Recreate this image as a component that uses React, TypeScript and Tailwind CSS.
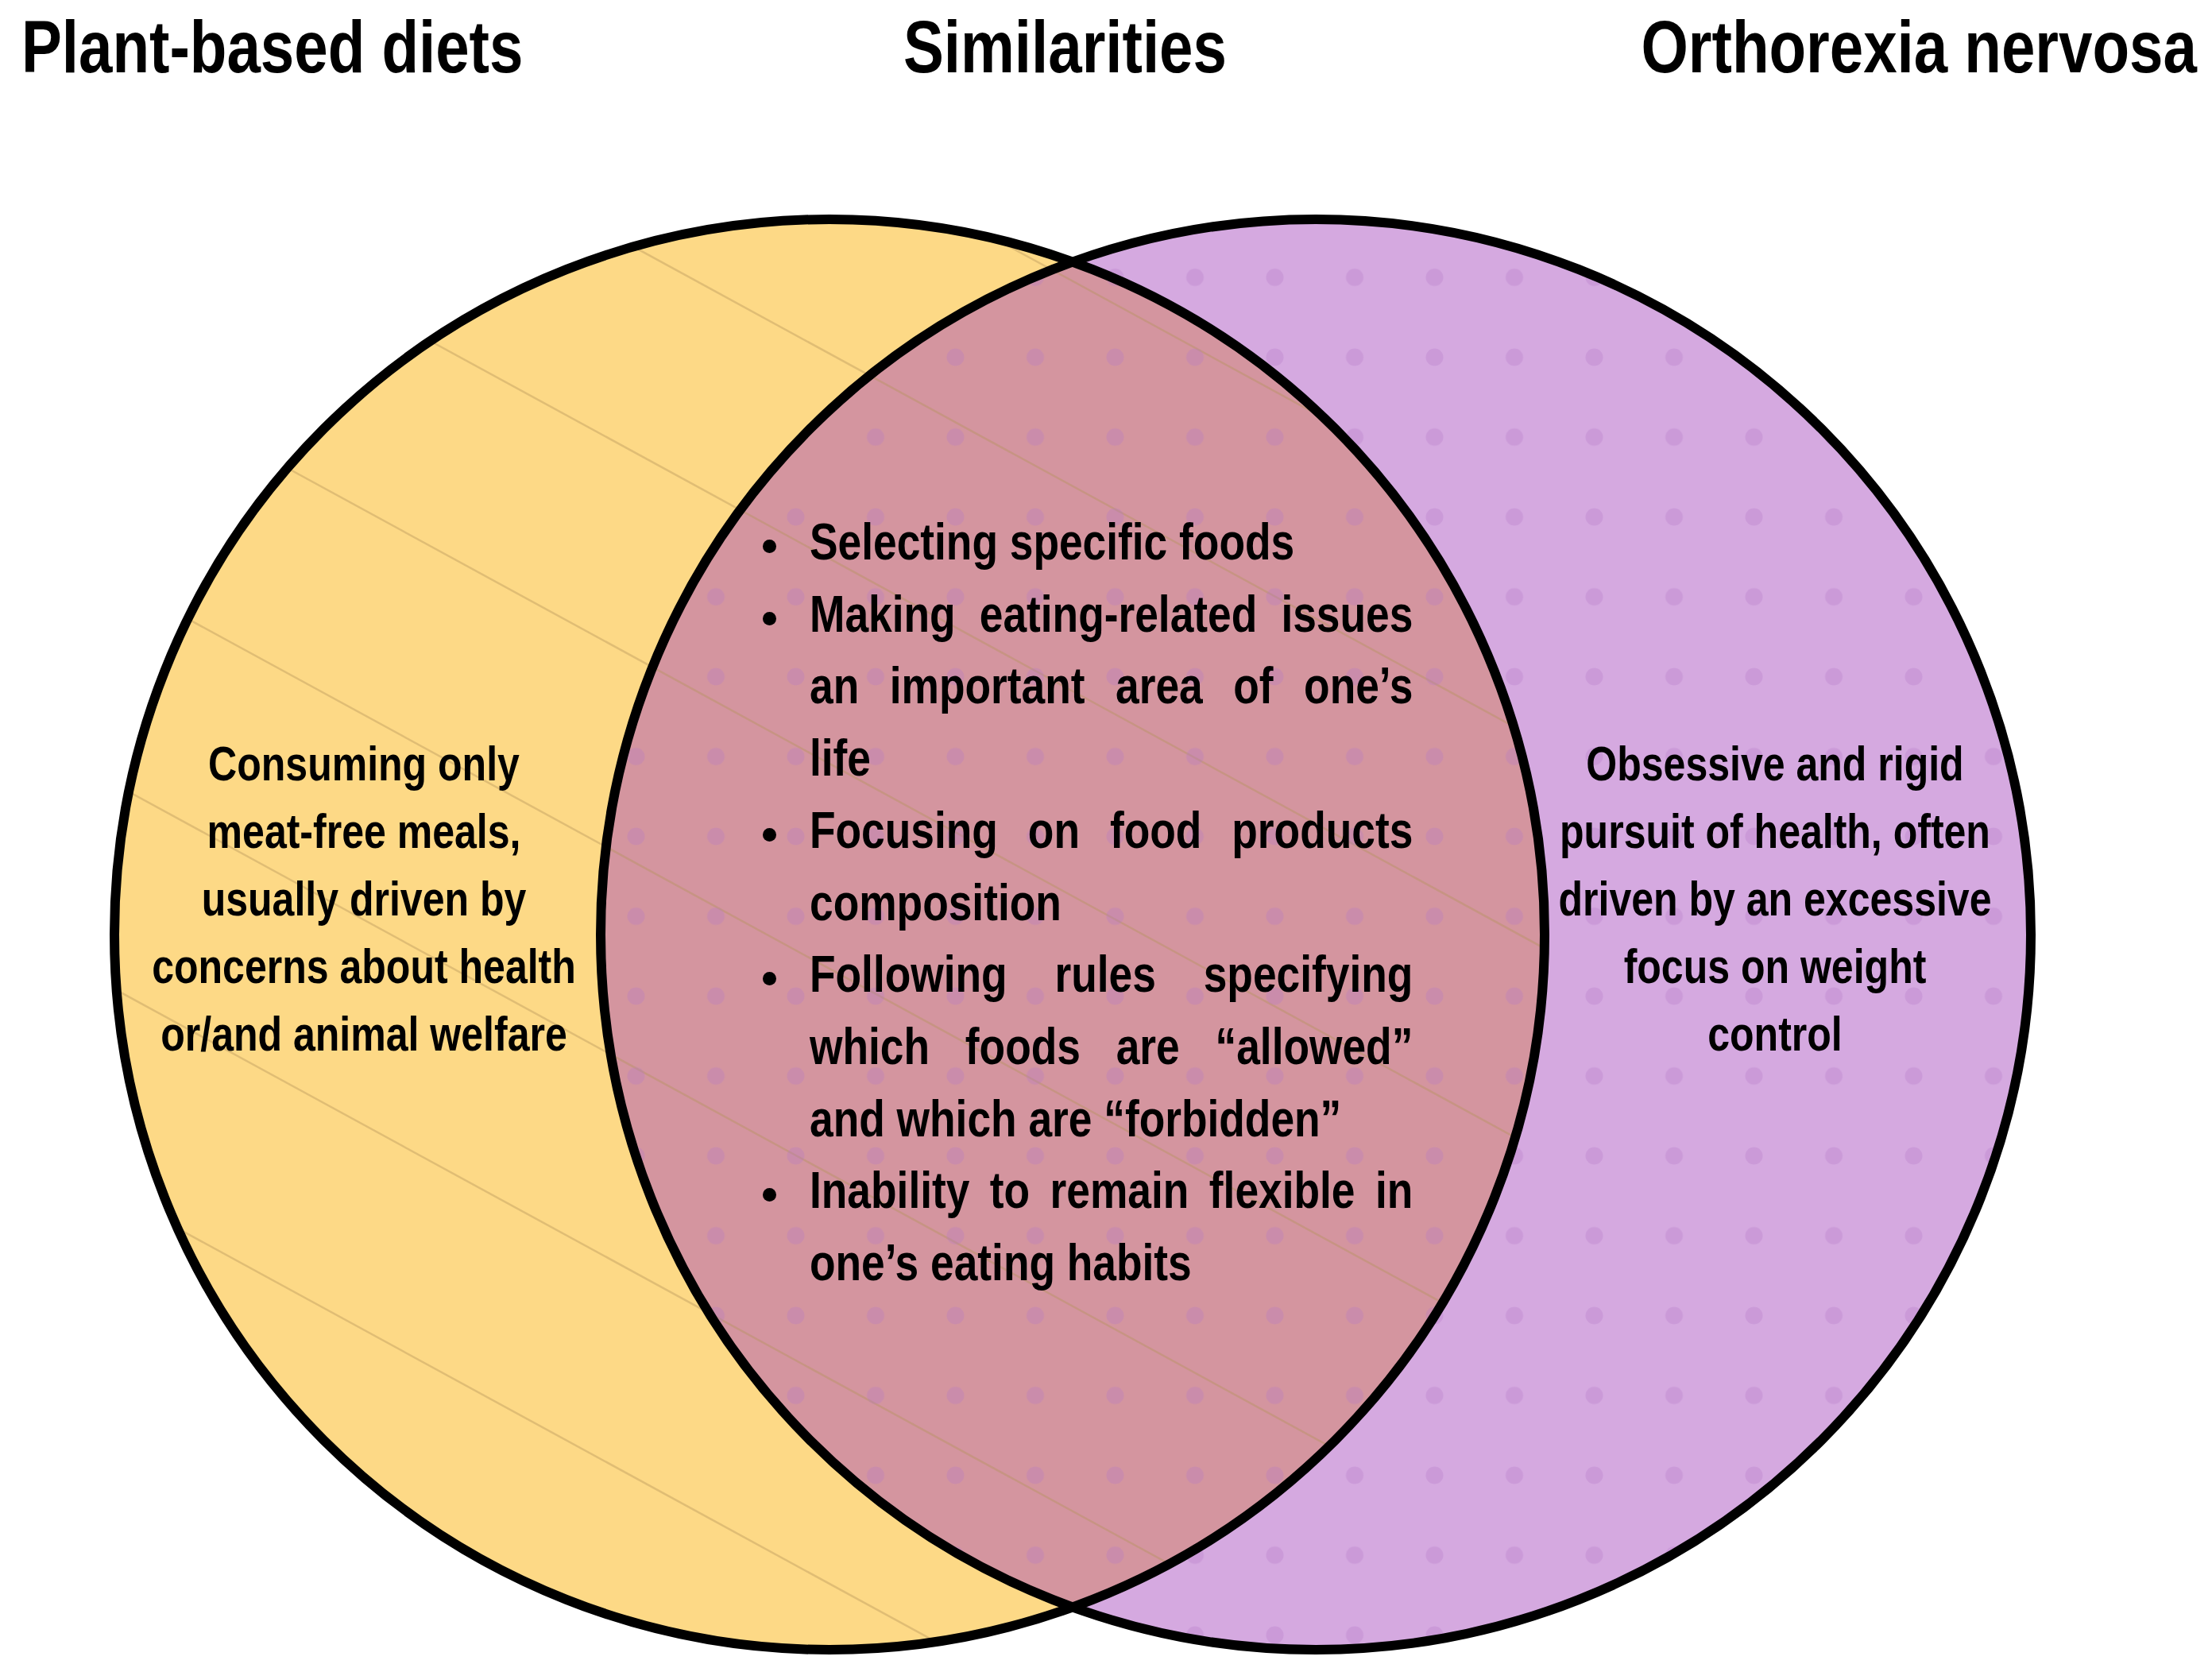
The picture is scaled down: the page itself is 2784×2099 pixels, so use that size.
const LEFT = { cx: 1044, cy: 1176, r: 900 };
const RIGHT = { cx: 1656, cy: 1176, r: 900 };

// hatch offsets for the plant-based circle: y = 0.545x + b
const HATCH = Array.from({ length: 12 }, (_, i) => -898 + 258 * i);

type Line = { text: string; justify?: boolean };

const SIMILARITIES: Line[][] = [
  [{ text: "Selecting specific foods" }],
  [
    { text: "Making eating-related issues", justify: true },
    { text: "an important area of one\u2019s", justify: true },
    { text: "life" },
  ],
  [
    { text: "Focusing on food products", justify: true },
    { text: "composition" },
  ],
  [
    { text: "Following rules specifying", justify: true },
    { text: "which foods are \u201callowed\u201d", justify: true },
    { text: "and which are \u201cforbidden\u201d" },
  ],
  [
    { text: "Inability to remain flexible in", justify: true },
    { text: "one\u2019s eating habits" },
  ],
];

function Venn() {
  return (
    <svg
      className="absolute left-0 top-0"
      width={2784}
      height={2099}
      viewBox="0 0 2784 2099"
    >
      <defs>
        <clipPath id="clip-left">
          <circle cx={LEFT.cx} cy={LEFT.cy} r={LEFT.r} />
        </clipPath>
        <clipPath id="clip-right">
          <circle cx={RIGHT.cx} cy={RIGHT.cy} r={RIGHT.r} />
        </clipPath>
        <pattern
          id="dots"
          patternUnits="userSpaceOnUse"
          x={1303 - 50.25}
          y={1957 - 50.25}
          width={100.5}
          height={100.5}
        >
          <circle cx={50.25} cy={50.25} r={11} fill="#b478c8" fillOpacity={0.3} />
        </pattern>
      </defs>

      <circle cx={LEFT.cx} cy={LEFT.cy} r={LEFT.r} fill="#fdd986" />
      <circle cx={RIGHT.cx} cy={RIGHT.cy} r={RIGHT.r} fill="#d5a9e0" />
      <g clipPath="url(#clip-left)">
        <circle cx={RIGHT.cx} cy={RIGHT.cy} r={RIGHT.r} fill="#d4959f" />
        {HATCH.map((b) => (
          <line
            key={b}
            x1={0}
            y1={b}
            x2={2100}
            y2={b + 0.545 * 2100}
            stroke="#b3945a"
            strokeOpacity={0.4}
            strokeWidth={2.5}
          />
        ))}
      </g>
      <rect
        x={0}
        y={0}
        width={2784}
        height={2099}
        fill="url(#dots)"
        clipPath="url(#clip-right)"
      />

      <circle cx={LEFT.cx} cy={LEFT.cy} r={LEFT.r} fill="none" stroke="#000" strokeWidth={12} />
      <circle cx={RIGHT.cx} cy={RIGHT.cy} r={RIGHT.r} fill="none" stroke="#000" strokeWidth={12} />
    </svg>
  );
}

// Liberation Sans squeezed to the width of a narrow face
const NARROW = "whitespace-nowrap scale-x-[0.82]";

function SideText({ lines, className }: { lines: string[]; className: string }) {
  return (
    <p
      className={
        "absolute top-[919px] w-[780px] origin-center text-center text-[61px] leading-[85px] " +
        NARROW +
        " " +
        className
      }
    >
      {lines.map((l) => (
        <span key={l} className="block">
          {l}
        </span>
      ))}
    </p>
  );
}

export default function App() {
  return (
    <div className="relative h-[2099px] w-[2784px] overflow-hidden bg-white font-bold text-black [font-family:'Liberation_Sans',Arial,sans-serif]">
      <Venn />

      {/* Column headings */}
      <header className="relative flex items-start pl-[27px] pr-[19px] pt-[13px] text-[93px] leading-none">
        <div className="w-[1110px] shrink-0">
          <h1 className={"inline-block origin-left " + NARROW}>Plant-based diets</h1>
        </div>
        <h1 className={"origin-left " + NARROW}>Similarities</h1>
        <h1 className={"ml-auto origin-right " + NARROW}>Orthorexia nervosa</h1>
      </header>

      <SideText
        className="left-[68px]"
        lines={[
          "Consuming only",
          "meat-free meals,",
          "usually driven by",
          "concerns about health",
          "or/and animal welfare",
        ]}
      />

      <ul className="absolute left-[960px] top-[637px] text-[65px] leading-[90.7px]">
        {SIMILARITIES.map((item, i) => (
          <li key={i} className="flex items-start">
            <span className="mt-[42px] h-[17px] w-[17px] shrink-0 rounded-full bg-black" />
            <span className={"ml-[42px] block w-[926px] shrink-0 origin-left " + NARROW}>
              {item.map((l) => (
                <span
                  key={l.text}
                  className={l.justify ? "block text-justify [text-align-last:justify]" : "block"}
                >
                  {l.text}
                </span>
              ))}
            </span>
          </li>
        ))}
      </ul>

      <SideText
        className="left-[1844px]"
        lines={[
          "Obsessive and rigid",
          "pursuit of health, often",
          "driven by an excessive",
          "focus on weight",
          "control",
        ]}
      />
    </div>
  );
}
